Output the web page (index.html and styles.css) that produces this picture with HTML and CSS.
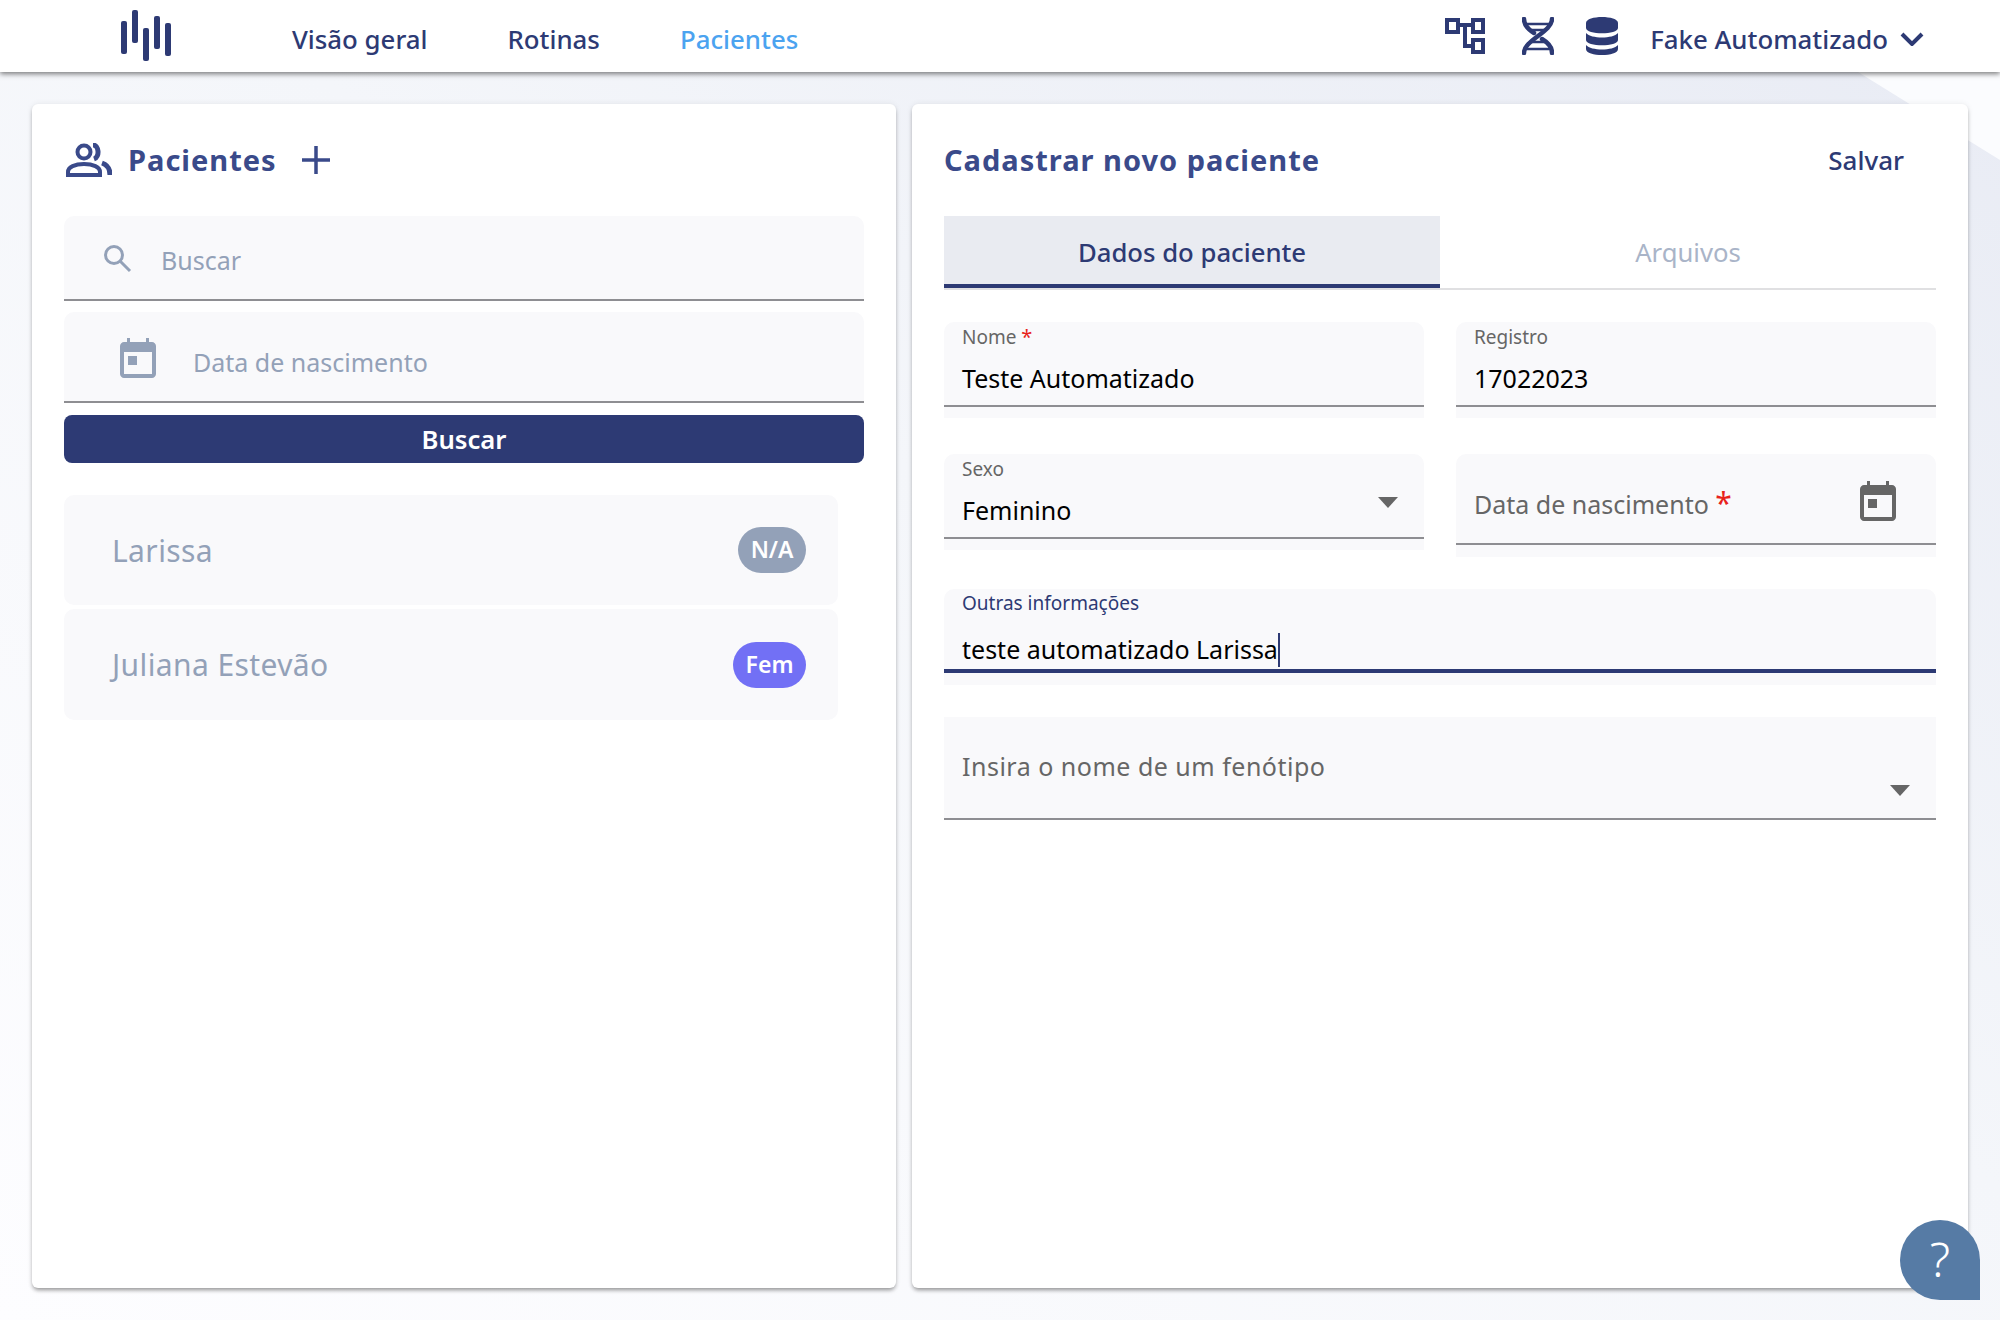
FILE: index.html
```html
<!DOCTYPE html>
<html>
<head>
    <title>Pacientes</title>
    <link rel="stylesheet" href="styles.css">
</head>
<body>
    <div class="bg-shape"></div>
    <header class="topbar">
        <div class="logo">
            <svg width="52" height="52" viewBox="0 0 52 52"><g fill="#2d3a74"><rect x="1" y="11" width="6" height="33" rx="2"/><rect x="12" y="0" width="6" height="33" rx="2"/><rect x="23" y="18" width="6" height="33" rx="2"/><rect x="34" y="6" width="6" height="33" rx="2"/><rect x="45" y="13" width="6" height="33" rx="2"/></g></svg>
        </div>
        <nav class="nav">
            <a>Visão geral</a>
            <a>Rotinas</a>
            <a class="active">Pacientes</a>
        </nav>
        <div class="top-right">
            <svg class="t-icon tree" width="40" height="36" viewBox="0 0 40 36" fill="none" stroke="#2d3a74" stroke-width="4"><rect x="2" y="2" width="11" height="12"/><rect x="28" y="2" width="10" height="12"/><rect x="28" y="22" width="10" height="12"/><path d="M13 7h15M20 7v21h8"/></svg>
            <svg class="t-icon dna" width="32" height="38" viewBox="0 0 32 38" fill="none" stroke="#2d3a74" stroke-width="4.5" stroke-linecap="round"><path d="M30 2c0 13-28 21-28 34"/><path d="M2 2c0 7 5 11 10 14M20 22c5 3 10 7 10 14"/><path d="M5 7h22M10 13h13M9 25h14M5 32h22" stroke-width="2.5"/></svg>
            <svg class="t-icon db" width="32" height="38" viewBox="0 0 32 38" fill="#2d3a74"><path d="M0 6c0-8 32-8 32 0v5c0 7-32 7-32 0z"/><path d="M0 16c5 6 27 6 32 0v7c0 7-32 7-32 0z"/><path d="M0 28c5 6 27 6 32 0v4c0 8-32 8-32 0z"/></svg>
            <span class="user">Fake Automatizado</span>
            <svg class="chev" width="24" height="14" viewBox="0 0 24 14" fill="none" stroke="#2d3a74" stroke-width="4"><path d="M2 2l10 10L22 2"/></svg>
        </div>
    </header>

    <main class="content">
        <section class="card">
            <div class="card-head">
                <svg class="people" width="46" height="34" viewBox="0 0 46 34" fill="none" stroke="#3a4a8a" stroke-width="4"><circle cx="18" cy="9" r="6.5"/><path d="M2 32v-3c0-5 7-8 16-8s16 3 16 8v3z"/><path d="M27 2c6 0 7 12 1 14M36 20c6 2 8 6 8 12" stroke-width="5"/></svg>
                <h2 class="title">Pacientes</h2>
                <svg width="30" height="30" viewBox="0 0 30 30" stroke="#3a4a8a" stroke-width="3.5"><path d="M15 1v28M1 15h28"/></svg>
            </div>
            <div class="filter filter-search">
                <svg width="30" height="30" viewBox="0 0 30 30" fill="none" stroke="#93a1b8" stroke-width="3"><circle cx="12" cy="12" r="8.5"/><path d="M18 18l10 10"/></svg>
                <span>Buscar</span>
            </div>
            <div class="filter filter-date">
                <svg class="cal" width="36" height="40" viewBox="0 0 36 40"><use href="#cal"/></svg>
                <span>Data de nascimento</span>
            </div>
            <button class="search-btn">Buscar</button>
            <ul class="patients">
                <li class="patient"><span>Larissa</span><b class="badge badge-na">N/A</b></li>
                <li class="patient"><span>Juliana Estevão</span><b class="badge badge-fem">Fem</b></li>
            </ul>
        </section>

        <section class="card">
            <div class="card-head form-head">
                <h2 class="title">Cadastrar novo paciente</h2>
                <a class="save">Salvar</a>
            </div>
            <div class="tabs">
                <div class="tab tab-on">Dados do paciente</div>
                <div class="tab">Arquivos</div>
            </div>
            <div class="form">
                <div class="field">
                    <label>Nome <i>*</i></label>
                    <div class="value">Teste Automatizado</div>
                </div>
                <div class="field">
                    <label>Registro</label>
                    <div class="value">17022023</div>
                </div>
                <div class="field field-select">
                    <label>Sexo</label>
                    <div class="value">Feminino</div>
                    <span class="arrow"></span>
                </div>
                <div class="field field-empty">
                    <div class="ph">Data de nascimento <i>*</i></div>
                    <svg class="cal-right" width="36" height="40" viewBox="0 0 36 40"><use href="#cal"/></svg>
                </div>
                <div class="field field-wide field-focus">
                    <label>Outras informações</label>
                    <div class="value">teste automatizado Larissa<span class="caret"></span></div>
                </div>
                <div class="field field-wide field-pheno">
                    <div class="ph">Insira o nome de um fenótipo</div>
                    <span class="arrow"></span>
                </div>
            </div>
        </section>
    </main>

    <div class="help">?</div>

    <svg width="0" height="0" class="defs"><defs><g id="cal"><path fill-rule="evenodd" d="M7 0h3v4h16V0h3v4h3c2 0 4 2 4 4v28c0 2-2 4-4 4H4c-2 0-4-2-4-4V8c0-2 2-4 4-4h3zM4 14v22h28V14z"/><rect x="8" y="18" width="9" height="9"/></g></defs></svg>
</body>
</html>
```

FILE: styles.css
```css
* {
    box-sizing: border-box;
}

html, body {
    margin: 0;
    height: 1320px;
    overflow: hidden;
}

body {
    position: relative;
    background: linear-gradient(to bottom left, #e8ebf4 0%, #f4f6fa 45%, #fdfdff 100%);
    font-family: "Noto Sans", "Open Sans", sans-serif;
    color: #2d3a74;
}

.bg-shape {
    position: absolute;
    top: 72px;
    right: 0;
    width: 142px;
    height: 88px;
    background: #fbfcfe;
    clip-path: polygon(0 0, 100% 0, 100% 100%);
}

.defs {
    position: absolute;
}

.topbar {
    position: relative;
    height: 72px;
    background: #fff;
    box-shadow: 0 2px 5px rgba(0,0,0,0.5);
    display: flex;
    align-items: center;
    padding-left: 120px;
}

.logo {
    width: 52px;
    height: 52px;
}

.nav {
    display: flex;
    gap: 80px;
    margin-left: 120px;
    padding-top: 6px;
    font-size: 25.8px;
    font-weight: 500;
}

.nav .active {
    color: #4ba3f0;
}

.top-right {
    display: flex;
    align-items: center;
    margin-left: auto;
    padding-right: 76px;
}

.t-icon {
    margin-right: 32px;
}

.tree {
    margin-right: 37px;
}

.user {
    padding-top: 6px;
    font-size: 25.8px;
    font-weight: 500;
    margin-right: 12px;
}

.chev {
    margin-top: 5px;
}

.content {
    position: relative;
    display: grid;
    grid-template-columns: 864px 1056px;
    gap: 16px;
    padding: 32px 32px 0;
}

.card {
    height: 1184px;
    background: #fff;
    border-radius: 6px;
    box-shadow: 0 3px 4px -1px rgba(0,0,0,0.4), 0 0 6px rgba(0,0,0,0.07);
    padding: 0 32px;
}

.card-head {
    display: flex;
    align-items: center;
    height: 112px;
}

.people {
    margin-left: 2px;
}

.title {
    margin: -2px 24px 0 16px;
    font-size: 29px;
    font-weight: 700;
    letter-spacing: 1px;
    color: #3a4a8a;
}

.form-head .title {
    margin-left: 0;
}

.save {
    margin-left: auto;
    margin-right: 32px;
    font-size: 26px;
    font-weight: 500;
}

.filter {
    display: flex;
    align-items: center;
    background: #f9f9fb;
    border-radius: 10px 10px 0 0;
    border-bottom: 2px solid #8e8e92;
    color: #93a1b8;
    font-size: 25px;
}

.filter-search {
    height: 85px;
    padding-left: 38px;
    gap: 29px;
}

.filter-search span {
    padding-top: 5px;
}

.filter-date {
    height: 91px;
    margin-top: 11px;
    padding-left: 56px;
    gap: 37px;
}

.filter-date span {
    padding-top: 10px;
}

.filter-date .cal {
    margin-top: 2px;
}

.cal {
    fill: #93a1b8;
}

.search-btn {
    display: block;
    width: 100%;
    height: 48px;
    margin-top: 12px;
    border: none;
    border-radius: 8px;
    background: #2d3a74;
    color: #fff;
    font: 600 25.7px "Noto Sans", "Open Sans", sans-serif;
}

.patients {
    list-style: none;
    margin: 32px 0 0;
    padding: 0;
    width: 774px;
}

.patient {
    display: flex;
    align-items: center;
    justify-content: space-between;
    height: 110px;
    margin-bottom: 4px;
    padding: 0 32px 0 48px;
    background: #f9f9fb;
    border-radius: 10px;
    color: #93a1b8;
    font-size: 30px;
    letter-spacing: 0.4px;
}

.patient + .patient {
    height: 111px;
}

.badge {
    height: 46px;
    line-height: 44px;
    padding: 0 13px;
    border-radius: 23px;
    color: #fff;
    font-size: 23px;
    font-weight: 600;
    letter-spacing: 0;
}

.badge-na {
    background: #93a1b8;
    padding: 0 12.5px;
}

.badge-fem {
    background: #7270f5;
    padding: 0 12.5px;
}

.tabs {
    display: flex;
    height: 74px;
    border-bottom: 2px solid #e0e0e2;
}

.tab {
    flex: 1;
    height: 72px;
    line-height: 74px;
    text-align: center;
    font-size: 25.7px;
    color: #a9b4c8;
}

.tab-on {
    background: #e9ebf1;
    border-bottom: 4px solid #2d3a74;
    color: #2d3a74;
    font-weight: 500;
}

.form {
    display: grid;
    grid-template-columns: 480px 480px;
    column-gap: 32px;
    margin-top: 32px;
    align-items: start;
}

.field {
    position: relative;
    height: 96px;
    margin-bottom: 36px;
    padding: 0 18px;
    background: #f9f9fb;
    border-radius: 10px 10px 0 0;
}

.field::after {
    content: "";
    position: absolute;
    left: 0;
    right: 0;
    top: 83px;
    height: 2px;
    background: #8e8e92;
}

.field label {
    display: block;
    padding-top: 1px;
    font-size: 19px;
    line-height: 28px;
    color: #666;
}

.field i {
    color: #e8231b;
    font-style: normal;
    font-size: 30px;
    line-height: 20px;
}

.field label i {
    font-size: 20px;
}

.value {
    margin-top: 9px;
    font-size: 25px;
    line-height: 36px;
    color: #000;
}

.ph {
    font-size: 25px;
    color: #666;
}

.field-empty {
    height: 103px;
    margin-bottom: 32px;
}

.field-empty::after {
    top: 89px;
}

.field-empty .ph {
    padding-top: 33px;
}

.cal-right {
    position: absolute;
    right: 40px;
    top: 27px;
    fill: #666;
}

.arrow {
    position: absolute;
    right: 26px;
    top: 43px;
    border-left: 10px solid transparent;
    border-right: 10px solid transparent;
    border-top: 11px solid #666;
}

.field-wide {
    grid-column: 1 / 3;
}

.field-focus {
    margin-bottom: 32px;
}

.field-focus label {
    padding-top: 0;
    color: #2d3a74;
}

.field-focus .value {
    margin-top: 14px;
}

.field-focus::after {
    top: 80px;
    height: 4px;
    background: #2d3a74;
}

.caret {
    display: inline-block;
    width: 2px;
    height: 34px;
    vertical-align: -8px;
    background: #2d3a74;
}

.field-pheno {
    height: 103px;
    border-radius: 0;
}

.field-pheno::after {
    top: 101px;
}

.field-pheno .ph {
    padding-top: 32px;
    letter-spacing: 0.5px;
}

.field-pheno .arrow {
    top: 68px;
}

.help {
    position: absolute;
    left: 1900px;
    top: 1220px;
    width: 80px;
    height: 80px;
    border-radius: 50% 50% 0 50%;
    background: #567ba5;
    color: #fff;
    font-size: 48px;
    font-weight: 300;
    line-height: 78px;
    text-align: center;
}
```
